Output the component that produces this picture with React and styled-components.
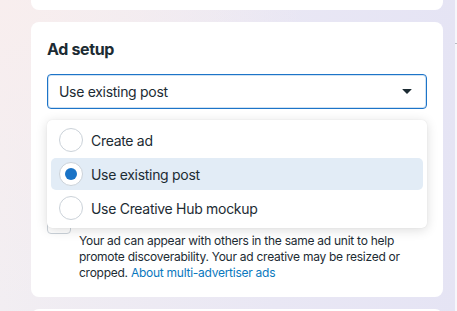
import React from 'react';
import styled, { createGlobalStyle } from 'styled-components';

const GlobalStyle = createGlobalStyle`
  html, body {
    margin: 0;
    padding: 0;
  }
  body {
    width: 457px;
    height: 311px;
    overflow: hidden;
    font-family: Inter, "Noto Sans", "Liberation Sans", sans-serif;
    color: #1c2b33;
    -webkit-font-smoothing: antialiased;
  }
`;

const Page = styled.div`
  display: flex;
  height: 311px;
  overflow: hidden;
  background:
    radial-gradient(circle at 0% 0%, #f8eeee 0%, rgba(248, 238, 238, 0) 55%),
    linear-gradient(90deg, #f2eef2 0%, #e9e7f4 60%, #e5e4f4 100%);
`;

const Column = styled.div`
  flex: 1;
  display: flex;
  flex-direction: column;
  gap: 12px;
  padding: 0 12px 0 31px;
`;

const SidePanel = styled.div`
  width: 2px;
  background: #f7f7fb;
  position: relative;

  &::after {
    content: '';
    position: absolute;
    top: 43px;
    left: 0;
    width: 2px;
    height: 1px;
    background: #b8bcc4;
  }
`;

const Card = styled.section`
  background: #ffffff;
  border-radius: 8px;
  flex-shrink: 0;
  height: ${p => (p.$height ? `${p.$height}px` : 'auto')};
`;

const CardStub = styled(Card)`
  border-radius: 0 0 8px 8px;
`;

const MainCard = styled(Card)`
  padding: 17px 16px 16px;
`;

const Title = styled.h2`
  margin: 0;
  font-size: 16px;
  line-height: 20px;
  font-weight: 700;
  letter-spacing: -0.35px;
  color: #1c2b33;
`;

const SelectWrap = styled.div`
  position: relative;
  margin-top: 15px;
`;

const SelectBox = styled.div`
  box-sizing: border-box;
  height: 35px;
  display: flex;
  align-items: center;
  justify-content: space-between;
  padding: 0 14px 0 11px;
  border: 1px solid #1d74c8;
  box-shadow: inset 0 0 0 1px #cfe2f3;
  border-radius: 4px;
  font-size: 14px;
  letter-spacing: -0.3px;
  color: #1c2b33;
`;

const Caret = styled.span`
  width: 0;
  height: 0;
  border-left: 5px solid transparent;
  border-right: 5px solid transparent;
  border-top: 5px solid #1c2b33;
  border-radius: 1px;
`;

const Menu = styled.ul`
  position: absolute;
  top: 46px;
  left: 0;
  right: 0;
  margin: 0;
  padding: 4px;
  list-style: none;
  background: #ffffff;
  border-radius: 5px;
  box-shadow: 0 2px 12px rgba(0, 0, 0, 0.14), 0 0 1px rgba(0, 0, 0, 0.12);
  display: flex;
  flex-direction: column;
  gap: 2px;
  z-index: 2;
`;

const Option = styled.li`
  height: 32px;
  display: flex;
  align-items: center;
  gap: 8px;
  padding-left: 8px;
  border-radius: 5px;
  font-size: 14px;
  letter-spacing: -0.3px;
  color: #1c2b33;
  background: ${p => (p.$active ? '#e2ecf6' : 'transparent')};
`;

const Radio = styled.span`
  box-sizing: border-box;
  width: 24px;
  height: 24px;
  border-radius: 50%;
  border: 1px solid #cbd2d9;
  background: #ffffff;
  display: flex;
  align-items: center;
  justify-content: center;

  &::after {
    content: '';
    width: 12px;
    height: 12px;
    border-radius: 50%;
    background: ${p => (p.$checked ? '#1a73c6' : 'transparent')};
  }
`;

const CheckRow = styled.div`
  display: flex;
  gap: 8px;
  margin-top: 101px;
`;

const Checkbox = styled.span`
  box-sizing: border-box;
  flex-shrink: 0;
  width: 24px;
  height: 24px;
  border: 1px solid #cbd2d9;
  border-radius: 4px;
  background: #ffffff;
`;

const CheckText = styled.div`
  font-size: 12px;
  line-height: 16px;
  letter-spacing: -0.26px;
`;

const CheckLabel = styled.div`
  font-size: 14px;
  line-height: 18px;
  margin-bottom: 5px;
`;

const Description = styled.p`
  margin: 0;
  color: #1c2b33;
`;

const Link = styled.a`
  color: #0a78be;
  text-decoration: none;
`;

const options = [
  { label: 'Create ad' },
  { label: 'Use existing post', selected: true },
  { label: 'Use Creative Hub mockup' },
];

export default function App() {
  return (
    <>
      <GlobalStyle />
      <Page>
        <Column>
          <CardStub $height={10} />
          <MainCard>
            <Title>Ad setup</Title>
            <SelectWrap>
              <SelectBox>
                <span>Use existing post</span>
                <Caret />
              </SelectBox>
              <Menu>
                {options.map(o => (
                  <Option key={o.label} $active={o.selected}>
                    <Radio $checked={o.selected} />
                    {o.label}
                  </Option>
                ))}
              </Menu>
            </SelectWrap>
            <CheckRow>
              <Checkbox />
              <CheckText>
                <CheckLabel>Multi-advertiser ads</CheckLabel>
                <Description>
                  Your ad can appear with others in the same ad unit to help
                  promote discoverability. Your ad creative may be resized or
                  cropped. <Link href="#">About multi-advertiser ads</Link>
                </Description>
              </CheckText>
            </CheckRow>
          </MainCard>
          <Card $height={20} />
        </Column>
        <SidePanel />
      </Page>
    </>
  );
}
